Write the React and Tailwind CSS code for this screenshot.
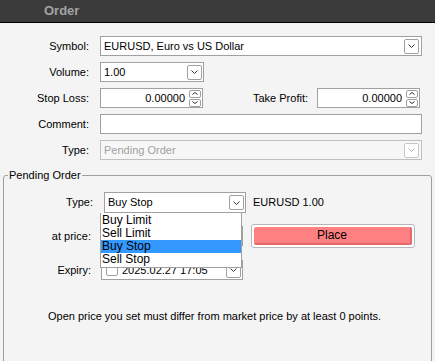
import React from "react";

function Chevron({ disabled }) {
  return (
    <div
      className={`w-[15px] h-[15px] rounded-[2px] border flex items-center justify-center bg-white ${
        disabled ? "border-[#c8c8c8]" : "border-[#a0a0a0]"
      }`}
    >
      <svg width="7" height="4" viewBox="0 0 7 4">
        <path d="M0.5 0.5 L3.5 3.5 L6.5 0.5" fill="none" stroke={disabled ? "#b0b0b0" : "#333"} strokeWidth="1" />
      </svg>
    </div>
  );
}

function Spinner() {
  return (
    <div className="flex flex-col gap-[1px]">
      {[0, 1].map((i) => (
        <div key={i} className="w-[12px] h-[8px] rounded-[2px] border border-[#a0a0a0] bg-white flex items-center justify-center">
          <svg width="6" height="3" viewBox="0 0 6 3">
            <path d={i === 0 ? "M0.5 2.5 L3 0.5 L5.5 2.5" : "M0.5 0.5 L3 2.5 L5.5 0.5"} fill="none" stroke="#333" strokeWidth="1" />
          </svg>
        </div>
      ))}
    </div>
  );
}

function Row({ label, children, className = "" }) {
  return (
    <div className={`flex items-center h-[20px] ${className}`}>
      <div className="w-[90px] text-right pr-[1px]">{label}</div>
      <div className="ml-[10px] flex items-center">{children}</div>
    </div>
  );
}

export default function App() {
  const items = ["Buy Limit", "Sell Limit", "Buy Stop", "Sell Stop"];

  return (
    <div className="w-[435px] h-[361px] bg-[#f4f4f4] overflow-hidden text-[11px] text-black font-['Liberation_Sans',Arial,sans-serif]">
      <div className="h-[23px] bg-[#3b3b3b] border-b border-black flex items-center pl-[44px]">
        <span className="font-bold text-[13px] text-[#a3a3a3]">Order</span>
      </div>

      <div className="pt-[13px]">
        <Row label="Symbol:" className="mb-[6px]">
          <div className="w-[322px] h-[20px] border border-[#a0a0a0] bg-white flex items-center pl-[3px] pr-[2px] justify-between">
            <span>EURUSD, Euro vs US Dollar</span>
            <Chevron />
          </div>
        </Row>
        <Row label="Volume:" className="mb-[6px]">
          <div className="w-[104px] h-[20px] border border-[#a0a0a0] bg-white flex items-center pl-[3px] pr-[1px] justify-between">
            <span>1.00</span>
            <Chevron />
          </div>
        </Row>
        <Row label="Stop Loss:" className="mb-[6px]">
          <div className="w-[103px] h-[20px] border border-[#a0a0a0] bg-white flex items-center justify-end pr-[1px] gap-[4px]">
            <span>0.00000</span>
            <Spinner />
          </div>
          <div className="w-[114px] text-right pr-[9px]">Take Profit:</div>
          <div className="w-[103px] h-[20px] border border-[#a0a0a0] bg-white flex items-center justify-end pr-[1px] gap-[4px]">
            <span>0.00000</span>
            <Spinner />
          </div>
        </Row>
        <Row label="Comment:" className="mb-[6px]">
          <div className="w-[322px] h-[20px] border border-[#a0a0a0] bg-white" />
        </Row>
        <Row label="Type:">
          <div className="w-[322px] h-[20px] border border-[#c0c0c0] bg-[#f7f7f7] flex items-center pl-[3px] pr-[2px] justify-between text-[#a0a0a0]">
            <span>Pending Order</span>
            <Chevron disabled />
          </div>
        </Row>
      </div>

      <fieldset className="mx-[3px] mt-[8px] border border-[#a0a0a0] rounded-[3px] h-[200px] px-0">
        <legend className="ml-[4px] px-[1px] leading-[14px]">Pending Order</legend>

        <div className="relative pt-[10px]">
          <Row label="Type:" className="h-[21px]">
            <div className="w-[142px] h-[21px] border border-[#a0a0a0] bg-white flex items-center pl-[3px] pr-[1px] justify-between">
              <span>Buy Stop</span>
              <Chevron />
            </div>
            <span className="ml-[7px]">EURUSD 1.00</span>
          </Row>

          <div className="flex items-center h-[24px] mt-[11px]">
            <div className="w-[87px] text-right">at price:</div>
            <div className="ml-[10px] w-[142px] h-[20px] border border-[#a0a0a0] bg-white" />
            <div className="ml-[8px] w-[164px] h-[24px] border border-[#b8b8b8] rounded-[3px] bg-white p-[2px]">
              <div className="h-full bg-[#ff8080] border-r-2 border-b-2 border-[#e46a6a] rounded-[2px] flex items-center justify-center text-[12px]">
                Place
              </div>
            </div>
          </div>

          <div className="flex items-center h-[20px] mt-[12px]">
            <div className="w-[87px] text-right">Expiry:</div>
            <div className="ml-[10px] w-[142px] h-[20px] border border-[#a0a0a0] bg-white flex items-center pl-[4px] pr-[1px] justify-between">
              <div className="flex items-center gap-[4px]">
                <div className="w-[12px] h-[12px] border border-[#a0a0a0] rounded-[2px] bg-white" />
                <span>2025.02.27 17:05</span>
              </div>
              <Chevron />
            </div>
          </div>

          <div className="mt-[28px] pl-[44px]">
            Open price you set must differ from market price by at least 0 points.
          </div>

          <div className="absolute left-[96px] top-[31px] w-[142px] border border-[#a0a0a0] border-t-0 bg-white text-[12px] leading-[13px] py-[1px]">
            {items.map((it) => (
              <div key={it} className={`pl-[1px] h-[13px] ${it === "Buy Stop" ? "bg-[#3399ff]" : ""}`}>
                {it}
              </div>
            ))}
          </div>
        </div>
      </fieldset>
    </div>
  );
}
